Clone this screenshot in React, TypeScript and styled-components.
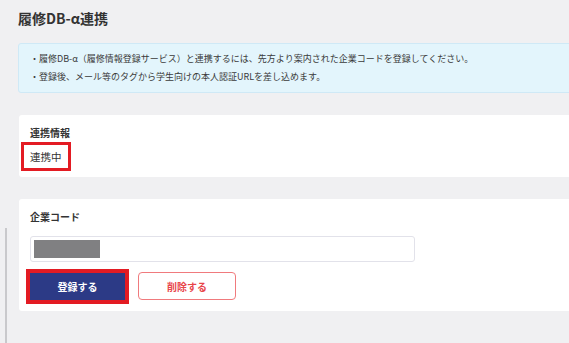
import React from 'react';
import styled, { createGlobalStyle } from 'styled-components';

const GlobalStyle = createGlobalStyle`
  html, body {
    margin: 0;
    padding: 0;
    background: #f0f0f2;
    overflow: hidden;
  }
  body {
    font-family: "Noto Sans CJK JP", "Noto Sans", sans-serif;
    color: #333333;
  }
`;

const Page = styled.div`
  position: relative;
  min-height: 343px;
  padding: 8px 0 0 18px;
  box-sizing: border-box;
`;

const Rail = styled.div`
  position: absolute;
  left: 5px;
  top: 228px;
  bottom: 0;
  width: 2px;
  background: #c9c9cc;
`;

const Content = styled.div`
  width: 580px;
  display: flex;
  flex-direction: column;
`;

const Title = styled.h1`
  margin: 0;
  font-size: 14px;
  font-weight: 700;
  line-height: 20px;
  color: #333333;
`;

const Notice = styled.ul`
  margin: 15px 0 0;
  padding: 6px 11px;
  list-style: none;
  background: #e3f5fc;
  border: 1px solid #cfe9f6;
  border-radius: 3px;
  font-size: 9px;
  line-height: 18px;
  color: #3a3a3a;
`;

const Card = styled.section<{ $bottom: number }>`
  margin-top: 22px;
  margin-left: 1px;
  background: #ffffff;
  border-radius: 3px;
  padding: 11px 11px ${(p) => p.$bottom}px;
  display: flex;
  flex-direction: column;
  align-items: flex-start;
`;

const Label = styled.div`
  font-size: 10px;
  font-weight: 700;
  line-height: 14px;
`;

const Status = styled.div`
  margin: 2px 0 0 -9px;
  padding: 4px 6px;
  border: 3px solid #e31b23;
  font-size: 10.5px;
  line-height: 15px;
`;

const CodeInput = styled.div`
  margin-top: 12px;
  width: 385px;
  height: 26px;
  box-sizing: border-box;
  border: 1px solid #e2e2ea;
  border-radius: 3px;
  padding: 3px;
`;

const Masked = styled.div`
  width: 66px;
  height: 100%;
  background: #808082;
`;

const Actions = styled.div`
  margin-top: 10px;
  display: flex;
  align-items: center;
  gap: 13px;
`;

const Button = styled.button<{ $variant: 'primary' | 'danger' }>`
  height: ${(p) => (p.$variant === 'primary' ? 27 : 28)}px;
  width: ${(p) => (p.$variant === 'primary' ? 95 : 98)}px;
  padding: 0;
  border-radius: ${(p) => (p.$variant === 'primary' ? 0 : 4)}px;
  font-family: inherit;
  font-size: 10px;
  font-weight: 700;
  cursor: pointer;
  ${(p) =>
    p.$variant === 'primary'
      ? `
    background: #2c3a86;
    color: #ffffff;
    border: none;
    outline: 4px solid #e31b23;
  `
      : `
    background: #ffffff;
    color: #e8454a;
    border: 1px solid #f07a7d;
  `}
`;

const App: React.FC = () => {
  return (
    <Page>
      <GlobalStyle />
      <Rail />
      <Content>
        <Title>履修DB-α連携</Title>
        <Notice>
          <li>・履修DB-α（履修情報登録サービス）と連携するには、先方より案内された企業コードを登録してください。</li>
          <li>・登録後、メール等のタグから学生向けの本人認証URLを差し込めます。</li>
        </Notice>
        <Card $bottom={6}>
          <Label>連携情報</Label>
          <Status>連携中</Status>
        </Card>
        <Card $bottom={11}>
          <Label>企業コード</Label>
          <CodeInput>
            <Masked />
          </CodeInput>
          <Actions>
            <Button $variant="primary">登録する</Button>
            <Button $variant="danger">削除する</Button>
          </Actions>
        </Card>
      </Content>
    </Page>
  );
};

export default App;
